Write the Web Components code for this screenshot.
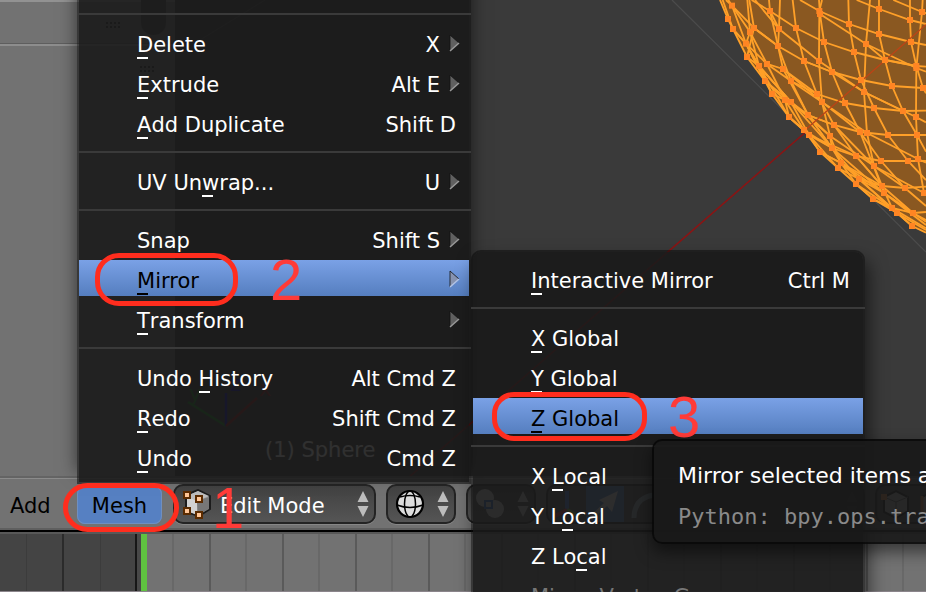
<!DOCTYPE html>
<html lang="en">
<head>
<meta charset="utf-8">
<title>Mesh menu</title>
<style>
  html, body { margin: 0; height: 100%; overflow: hidden; background: #3a3a3a; }
  body { font: 21px/26px "DejaVu Sans", sans-serif; color: #fff; }
</style>
</head>
<body>
<editor-window>
  <view-port slot="view"></view-port>
  <editor-header slot="header"></editor-header>
  <time-line slot="timeline"></time-line>

  <pop-menu slot="overlay" class="main" aria-label="Mesh">
    <menu-rule></menu-rule>
    <menu-item shortcut="X" arrow><u>D</u>elete</menu-item>
    <menu-item shortcut="Alt E" arrow><u>E</u>xtrude</menu-item>
    <menu-item shortcut="Shift D"><u>A</u>dd Duplicate</menu-item>
    <menu-rule></menu-rule>
    <menu-item shortcut="U" arrow>UV Un<u>w</u>rap...</menu-item>
    <menu-rule></menu-rule>
    <menu-item shortcut="Shift S" arrow><u>S</u>nap</menu-item>
    <menu-item active arrow><u>M</u>irror</menu-item>
    <menu-item arrow><u>T</u>ransform</menu-item>
    <menu-rule></menu-rule>
    <menu-item shortcut="Alt Cmd Z">Undo <u>H</u>istory</menu-item>
    <menu-item shortcut="Shift Cmd Z"><u>R</u>edo</menu-item>
    <menu-item shortcut="Cmd Z"><u>U</u>ndo</menu-item>
  </pop-menu>

  <pop-menu slot="overlay" class="sub" aria-label="Mirror">
    <menu-item shortcut="Ctrl M"><u>I</u>nteractive Mirror</menu-item>
    <menu-rule></menu-rule>
    <menu-item><u>X</u> Global</menu-item>
    <menu-item><u>Y</u> Global</menu-item>
    <menu-item active><u>Z</u> Global</menu-item>
    <menu-rule></menu-rule>
    <menu-item>X <u>L</u>ocal</menu-item>
    <menu-item>Y L<u>o</u>cal</menu-item>
    <menu-item>Z Lo<u>c</u>al</menu-item>
    <menu-item disabled>Mirror Vertex Group</menu-item>
  </pop-menu>

  <step-mark slot="overlay" class="one">1</step-mark>
  <step-mark slot="overlay" class="two">2</step-mark>
  <step-mark slot="overlay" class="three">3</step-mark>

  <tool-tip slot="overlay">Mirror selected items around one or more axes
    <span slot="code">Python: bpy.ops.transform.mirror()</span>
  </tool-tip>
</editor-window>

<script>
const define = (name, html, setup) => {
  const template = document.createElement('template');
  template.innerHTML = html;
  customElements.define(name, class extends HTMLElement {
    constructor() {
      super();
      this.attachShadow({ mode: 'open' }).append(template.content.cloneNode(true));
    }
    connectedCallback() { if (setup) setup(this, this.shadowRoot); }
  });
};

define('editor-window', `
<style>
  :host { position: relative; display: grid; grid-template-rows: 1fr auto auto; height: 100vh; overflow: hidden; }
  ::slotted([slot="overlay"]) { position: absolute; }
  ::slotted(.main) { left: 77px; top: -20px; width: 394px; --pad-top: 24px; --shade: 0 -12px 16px; --radius: 0; }
  ::slotted(.sub) { left: 471px; top: 250px; width: 394px; --shade: 4px 10px 18px; --radius: 10px 10px 0 0; }
  ::slotted(.one) { left: 63px; top: 483px; --w: 116px; --h: 49px; --gap: 33px; --r: 25px; }
  ::slotted(.two) { left: 95px; top: 253px; --w: 143px; --h: 53px; --gap: 32px; --r: 24px; }
  ::slotted(.three) { left: 492px; top: 392px; --w: 155px; --h: 49px; --gap: 21px; --r: 22px; }
  ::slotted(tool-tip) { left: 652px; top: 439px; }
</style>
<slot name="view"></slot><slot name="header"></slot><slot name="timeline"></slot><slot name="overlay"></slot>`);

define('pop-menu', `
<style>
  :host { display: flex; flex-direction: column; gap: 4px; box-sizing: border-box;
    padding: var(--pad-top, 8px) 0 8px; border: 2px solid rgba(10,10,10,.55); border-radius: var(--radius);
    background: rgba(25,25,25,.9); background-clip: padding-box; box-shadow: var(--shade) rgba(0,0,0,.55); }
</style><slot></slot>`, host => host.setAttribute('role', 'menu'));

define('menu-rule', `
<style>
  :host { display: block; padding: 7px 0 5px; margin: 0 -2px; }
  hr { margin: 0; border: 0; height: 2px; background: #3a3a3a; }
</style><hr>`);

define('menu-item', `
<style>
  :host { display: block; }
  button { display: flex; align-items: center; gap: 9px; width: 100%; height: 36px; box-sizing: border-box;
    margin: 0; padding: 6px 13px 0 58px; border: 0; background: none; color: #fff; font: inherit; text-align: left; white-space: nowrap; }
  :host([arrow]) button { padding-right: 9px; }
  :host([active]) button { background: linear-gradient(#7aa1e6, #557ebf); color: #000; }
  :host([disabled]) button { color: #777; }
  .label { flex: 1; }
  ::slotted(u) { text-decoration: none; padding: 0 5px 2px 0; margin-right: -5px;
    background: linear-gradient(currentColor, currentColor) left bottom / 11px 2px no-repeat; }
  svg { display: none; margin-top: -5px; }
  :host([arrow]) svg { display: block; }
  .face { fill: #606060; }
  :host([active]) .face { fill: #8793b0; }
  :host([active]) .lit { stroke: #b2c3e6; }
</style>
<button type="button" role="menuitem"><span class="label"><slot></slot></span><span class="key"></span>
<svg width="11" height="18" viewBox="0 0 11 18" aria-hidden="true"><path class="face" d="M1 1V17L10 9Z"/><path d="M1 17V1L10 9" fill="none" stroke="#111" stroke-opacity=".8"/><path class="lit" d="M1 17L10 9" stroke="#999" stroke-width="1.5"/></svg></button>`,
(host, root) => {
  const key = root.querySelector('.key');
  key.textContent = host.getAttribute('shortcut') || '';
  key.hidden = !host.hasAttribute('shortcut');
  root.querySelector('button').disabled = host.hasAttribute('disabled');
});

define('tool-tip', `
<style>
  :host { display: flex; flex-direction: column; gap: 14px; box-sizing: border-box; padding: 22px 24px 11px; white-space: nowrap; font-size: 22px;
    border: 2px solid rgba(8,8,8,.9); border-radius: 10px; background: rgba(25,25,25,.92); background-clip: padding-box; box-shadow: 0 8px 16px rgba(0,0,0,.5); }
  ::slotted([slot="code"]) { font: 22px/28px "DejaVu Sans Mono", monospace; color: #8a8a8a; }
</style><span><slot></slot></span><slot name="code"></slot>`, host => host.setAttribute('role', 'tooltip'));

define('step-mark', `
<style>
  :host { display: flex; align-items: center; height: var(--h); gap: var(--gap); pointer-events: none;
    font: 58px/58px "Liberation Sans", sans-serif; color: #ff3b38; }
  i { box-sizing: border-box; width: var(--w); height: var(--h); border: 5px solid #ff2d1e; border-radius: var(--r); }
</style><i></i><span><slot></slot></span>`);

define('drop-select', `
<style>
  :host { display: grid; grid-template-columns: minmax(0, 1fr); height: 40px; border-radius: 10px; box-sizing: border-box; border: 2px solid #242424;
    background: linear-gradient(#414141, #555); box-shadow: 0 1px 0 #878787; }
  select, .icon, .arrows { grid-area: 1 / 1; pointer-events: none; }
  select { appearance: none; width: 100%; height: 36px; margin: 0; border: 0; background: none; color: #fff; font: inherit; padding: 4px 30px 0 45px; pointer-events: auto; outline: 0; }
  :host([bare]) select { color: transparent; font-size: 0; padding: 0; }
  .icon { justify-self: start; margin: 3px 0 0 7px; line-height: 0; }
  .arrows { justify-self: end; margin: 5px 5px 0 0; }
</style>
<select></select><span class="icon"><slot></slot></span>
<svg class="arrows" width="12" height="26" viewBox="0 0 12 26" aria-hidden="true"><path d="M6 0L11.500 11H.5ZM.5 15H11.500L6 26Z" fill="#bdbdbd"/></svg>`,
(host, root) => {
  const select = root.querySelector('select');
  select.setAttribute('aria-label', host.getAttribute('label'));
  if (!host.hasAttribute('bare')) select.add(new Option(host.getAttribute('value')));
});

define('editor-header', `
<style>
  :host { display: flex; align-items: flex-start; gap: 10px; box-sizing: border-box; height: 54px; padding-top: 6px; overflow: hidden;
    background: linear-gradient(#8b8b8b, #8b8b8b) 0 0 / 100% 1px no-repeat, #727272;
    border-top: 2px solid #646464; border-bottom: 2px solid #5f5f5f; }
  .menus { display: flex; margin-right: 1px; }
  button { border: 0; margin: 0; background: none; color: #000; font: inherit; }
  .add { width: 77px; padding: 4px 0 0 10px; text-align: left; height: 40px; }
  .mesh { width: 85px; height: 38px; padding: 2px 0 0; margin-top: 2px; border-radius: 8px; background: #5680c2; box-shadow: inset 0 0 0 1px #6f8fc0; }
  .mode { width: 203px; } .small { width: 70px; }
  .tools { display: flex; box-sizing: border-box; border: 2px solid #242424; border-radius: 10px; height: 40px; width: 154px; background: #505050; }
  .tools button { width: 38px; padding: 2px; }
  .tools .on { background: #5680c2; }
  .tools svg, drop-select svg { display: block; }
  drop-select, .menus, .tools { flex: none; }
  .orient { width: 155px; }
</style>
<nav class="menus"><button class="add" type="button">Add</button><button class="mesh" type="button">Mesh</button></nav>
<drop-select class="mode" label="Mode" value="Edit Mode">
  <svg width="30" height="30" viewBox="0 0 30 30"><path d="M4 6L16 1L28 7V20L17 27L4 23Z" fill="#999" stroke="#1c1c1c" stroke-width="2"/><path d="M5 7L16 2L27 7L15 12Z" fill="#bcbcbc"/><path d="M5 7L15 12V26L5 22Z" fill="#d2d2d2"/><path d="M15 12L27 8V20L16 26Z" fill="#777"/><g fill="#ffc697" stroke="#5b2b00" stroke-width="2"><path d="M2 3h6v6H2zM14 7h6v6h-6zM2 19h6v6H2zM14 23h6v6h-6z"/></g></svg>
</drop-select>
<drop-select class="small" bare label="Viewport shading">
  <svg width="30" height="30" viewBox="0 0 30 30"><circle cx="15" cy="15" r="13" fill="#ddd" stroke="#000" stroke-width="2.200"/><g fill="none" stroke="#000" stroke-width="1.500"><ellipse cx="15" cy="15" rx="5.500" ry="13"/><path d="M2 16Q15 21 28 16M5 8Q15 5 25 8"/></g></svg>
</drop-select>
<drop-select class="small" bare label="Pivot point">
  <svg width="30" height="30" viewBox="0 0 30 30"><circle cx="10" cy="9" r="9" fill="#ccc"/><circle cx="20" cy="20" r="9" fill="#ccc"/><path d="M10 12h7v7h-7z" fill="none" stroke="#2f69c0" stroke-width="2"/></svg>
</drop-select>
<div class="tools">
  <button type="button" aria-label="Manipulator"><svg width="32" height="32" viewBox="0 0 32 32" fill="none" stroke-width="4"><path d="M17 3V22" stroke="#4777dd"/><path d="M17 22L3 29" stroke="#d33"/><path d="M17 22L30 29" stroke="#7b3"/></svg></button>
  <button class="on" type="button" aria-label="Translate"><svg width="32" height="32" viewBox="0 0 32 32"><path d="M2 28L16 15L11 12L30 3L24 24L19 18L5 31Z" fill="#ddd"/></svg></button>
  <button type="button" aria-label="Rotate"><svg width="32" height="32" viewBox="0 0 32 32"><path d="M8 30Q8 10 28 7" fill="none" stroke="#9ab" stroke-width="5"/></svg></button>
</div>
<drop-select class="orient" bare label="Orientation"></drop-select>
<div class="tools">
  <button type="button" aria-label="Vertex select"><svg width="32" height="32" viewBox="0 0 32 32"><path d="M5 9L17 3L29 9V23L17 30L5 24Z" fill="#ccc" stroke="#111" stroke-width="2"/><path d="M5 9L17 14L29 9M17 14V30" stroke="#666" fill="none"/><path d="M2 6h6v6H2z" fill="#ff9a50"/></svg></button>
  <button type="button" aria-label="Edge select"><svg width="32" height="32" viewBox="0 0 32 32"><path d="M5 9L17 3L29 9V23L17 30L5 24Z" fill="#ccc" stroke="#111" stroke-width="2"/><path d="M5 8V25" stroke="#ff9a50" stroke-width="3"/></svg></button>
</div>`);

define('time-line', `
<style>
  :host { display: grid; grid-template-columns: 141px 6px 1fr; box-sizing: border-box; height: 62px; padding-top: 2px;
    border-top: 2px solid #000; border-bottom: 1px solid #8b858b; background: #585858; }
  .past { background: linear-gradient(90deg, transparent 26px, #3c3c3c 26px 27px, transparent 27px 62px, #2b2b2b 62px 64px, transparent 64px 100px, #3c3c3c 100px 101px, transparent 101px 135px, #171717 135px 137px, #484848 137px), #444; }
  .now { background: #5fc240; }
  .future { background: repeating-linear-gradient(90deg, transparent 0 25px, #686868 25px 27px, transparent 27px 62px, #5a5a5a 62px 64px, transparent 64px 73px), #727272; }
</style><div class="past"></div><div class="now"></div><div class="future"></div>`);

define('view-port', `
<style>
  :host { display: grid; grid-template-columns: 175px 1fr; min-height: 0; overflow: hidden; background: #3a3a3a; }
  .panel { grid-area: 1 / 1; background: linear-gradient(#929292, #929292) 0 0 / 100% 2px no-repeat, linear-gradient(#5e5e5e, #5e5e5e) 0 43px / 100% 1px no-repeat, linear-gradient(#8d8d8d, #8d8d8d) 0 44px / 100% 2px no-repeat, #727272; }
  svg { grid-area: 1 / 1 / 2 / 3; display: block; width: 926px; height: 476px; }
  text { font: 21px "DejaVu Sans", sans-serif; }
</style>
<div class="panel"></div>
<svg viewBox="0 0 926 476" aria-hidden="true">
  <rect x="141" y="-20" width="25" height="55" rx="12" fill="#444"/>
  <g stroke="#222" stroke-width="2" stroke-dasharray="2 2"><path d="M106 23H121M106 27H121M140 67H155M140 71H155"/></g>
  <path d="M672 0L926 252" stroke="#4c4c4c" stroke-width="1.200"/><path d="M265 0L200 40" stroke="#4c4c4c"/>
  <g stroke-width="2.500" fill="none"><path d="M226 426L188 402" stroke="#0c8a1c"/><path d="M226 426V393" stroke="#0000c4"/><path d="M226 426L257 398" stroke="#9c1212"/></g>
  <text x="189" y="401" fill="#0c8a1c">y</text><text x="230" y="391" fill="#0000c4">z</text><text x="259" y="396" fill="#9c1212">x</text>
  <text x="265" y="457" fill="#fff">(1) Sphere</text>
  <path d="M808 130L400 485" stroke="#8b1414" stroke-width="1.600"/>
  <g transform="translate(640 0) scale(.33333)" id="mesh"></g>
</svg>`, (host, root) => {
  const edges = `
240,0 264,57 279,87 321,171 375,243 396,282 447,351 492,390 540,456 594,504 648,552 699,597 771,639 816,678 858,698
248,0 279,87 318,131 357,198 396,282 435,300 447,351 507,405 540,456 603,489 648,552 756,624 816,678
258,0 276,17 318,131 375,243 435,300 492,390 576,444 657,537 732,579 819,639 858,665
265,0 276,17 330,96 357,198 453,306 507,405 594,504 657,537 771,639 858,690
322,0 330,96 381,192 435,300 504,345 570,408 603,489 726,558
328,0 342,84 321,171
276,17 342,84 414,138
279,87 318,131 357,198 447,351
330,96 318,131 375,243 453,306 576,444
321,171 357,198 453,306
387,0 390,33 414,138 429,207 504,345 576,444
420,0 417,87 414,138 453,243 504,345 582,375
458,0 468,84 492,183 531,282 582,375 648,468 726,558
546,0 538,33 537,183 546,306 570,408 576,444 603,489
537,0 540,42 552,126 576,216 615,309 660,396 732,579
625,0 627,72 642,156 663,240 702,324 744,405 804,483 858,540
690,0 678,132 672,276 681,399 702,498 726,558 756,624
717,0 717,102 735,180 756,258 789,333 831,405 858,455
810,0 810,60 813,126 829,198 849,264 858,280
848,0 846,36 829,204 828,351 834,477 852,579
335,0 390,33 468,84 552,126 642,156 735,180 829,198 858,200
342,84 414,138 492,183 576,216 663,240 756,258 849,264 858,264
318,131 381,192 453,243 531,282 615,309 702,324 789,333 858,332
357,198 453,306 504,345 582,375 660,396 744,405 858,405
447,351 507,405 576,444 648,468 723,483 858,483
540,456 603,489 657,537 726,558 795,564 858,560
648,552 699,597 756,624 819,639 858,636
480,0 538,33 627,72 717,102 813,126 858,135
650,0 717,27 810,60 858,72
760,0 846,36 858,40
540,42 678,132 829,204 858,215
345,0 417,87 537,183 672,276 828,351 858,367
390,33 417,87
429,207 546,306 681,399 834,477 858,488
381,192 429,207 531,282
453,243 546,306 660,396 723,483 795,564 858,618
492,183 576,216 672,276 789,333
453,306 570,408 702,498 852,579
504,345 576,444 732,579 819,639
582,375 702,498 795,564
507,405 648,468 726,558 819,639 858,660
603,489 732,579 858,675
657,537 756,624 858,685
678,132 735,180 829,198`.trim().split('\n');
  const nodes = '276,17 264,57 279,87 318,131 321,171 330,96 342,84 390,33 417,87 414,138 468,84 357,198 381,192 375,243 396,282 429,207 453,243 435,300 453,306 447,351 492,183 537,183 552,126 538,33 540,42 576,216 531,282 546,306 504,345 492,390 507,405 540,456 582,375 570,408 576,444 603,489 594,504 615,309 642,156 627,72 678,132 663,240 672,276 702,324 717,27 717,102 735,180 756,258 789,333 660,396 681,399 744,405 648,468 723,483 702,498 657,537 648,552 726,558 732,579 699,597 756,624 771,639 816,678 819,639 795,564 804,483 834,477 831,405 828,351 849,264 829,198 829,204 813,126 810,60 846,36 852,579';
  root.querySelector('#mesh').innerHTML =
    '<polygon fill="#8a5821" points="' + edges[0] + ' 858,0"/>' +
    '<g fill="none" stroke="#ffa028" stroke-width="5.500">' + edges.map(e => '<polyline points="' + e + '"/>').join('') + '</g>' +
    '<path d="M492 393L858 74" stroke="#bd4316" stroke-width="4"/>' +
    '<g fill="#ff8523">' + nodes.split(' ').map(n => { const [x, y] = n.split(','); return '<rect x="' + (x - 9) + '" y="' + (y - 9) + '" width="18" height="18"/>'; }).join('') + '</g>';
});
</script>
</body>
</html>
